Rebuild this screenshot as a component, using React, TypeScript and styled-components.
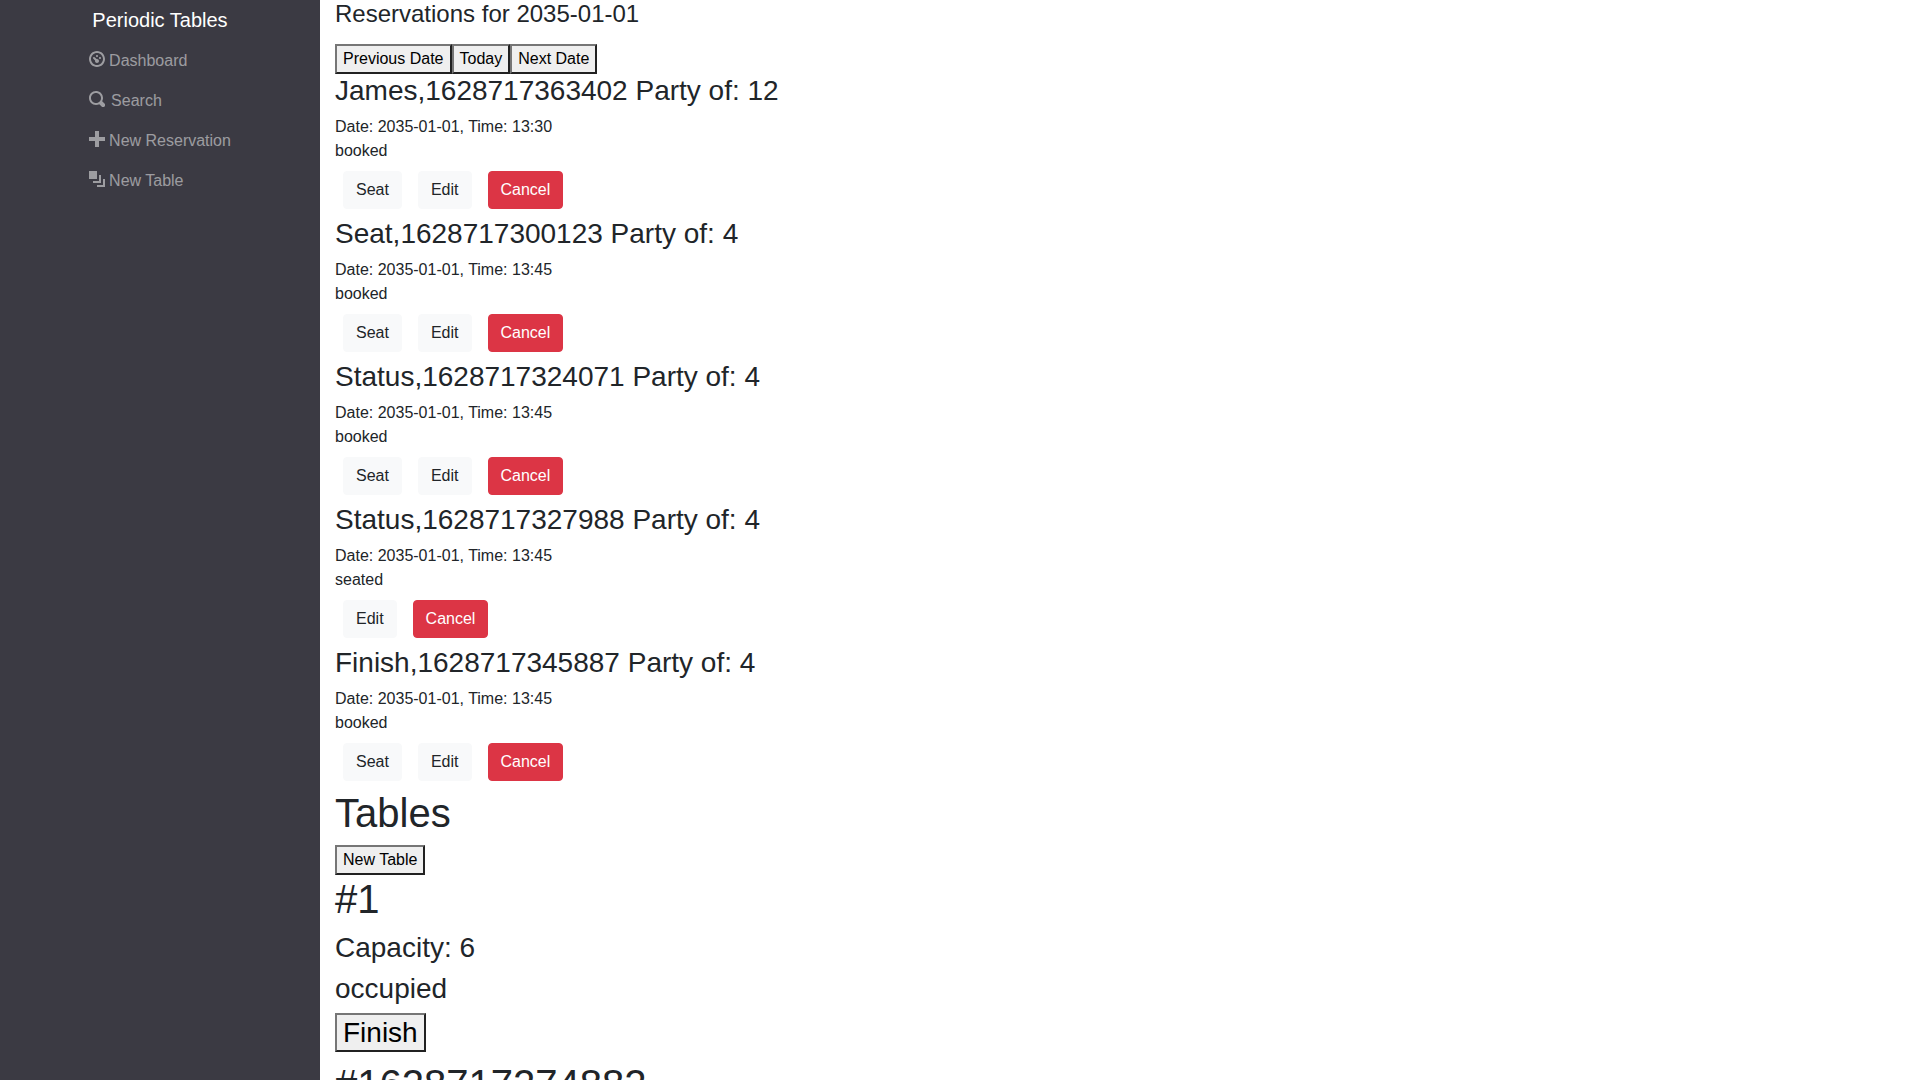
import React from "react";
import styled, { createGlobalStyle } from "styled-components";

const GlobalStyle = createGlobalStyle`
  *, *::before, *::after { box-sizing: border-box; }
  body {
    margin: 0;
    background: #fff;
    color: #212529;
    font-family: "Liberation Sans", Arial, sans-serif;
    font-size: 16px;
    line-height: 24px;
  }
`;

const Layout = styled.div`
  display: grid;
  grid-template-columns: minmax(0, 1fr) minmax(0, 5fr);
  height: 100vh;
  overflow: hidden;
`;

const Sidebar = styled.nav`
  display: flex;
  flex-direction: column;
  align-items: center;
  background: #3b3a43;
`;

const Brand = styled.a`
  color: #fff;
  font-size: 20px;
  line-height: 40px;
  text-decoration: none;
`;

const NavList = styled.ul`
  margin: 0;
  padding: 0;
  list-style: none;
`;

const NavLink = styled.a<{ $gap: number }>`
  display: flex;
  align-items: center;
  gap: ${(p) => p.$gap}px;
  height: 40px;
  padding-top: 2px;
  color: rgba(255, 255, 255, 0.5);
  text-decoration: none;
`;

const Icon = styled.svg`
  width: 16px;
  height: 16px;
  margin-bottom: 4px;
  fill: currentColor;
`;

const Main = styled.main`
  padding: 0 15px;
`;

const DateHeading = styled.h4`
  margin: 0 0 16px;
  font-size: 24px;
  font-weight: 400;
  line-height: 28px;
`;

const PageHeading = styled.h1`
  margin: 0 0 8px;
  font-size: 40px;
  font-weight: 400;
  line-height: 48px;
`;

const ItemHeading = styled.h3`
  margin: 0 0 8px;
  font-size: 28px;
  font-weight: 400;
  line-height: 33px;
`;

const Row = styled.div`
  display: flex;
`;

const Text = styled.p`
  margin: 0;
`;

const PlainButton = styled.button<{ $large?: boolean }>`
  padding: 1px 6px;
  border: 2px solid;
  border-color: #767676 #212121 #212121 #767676;
  border-radius: 0;
  background: #efefef;
  color: #000;
  font-family: inherit;
  font-size: ${(p) => (p.$large ? 28 : 16)}px;
  line-height: ${(p) => (p.$large ? 33 : 24)}px;
`;

const ActionButton = styled.button<{ $danger?: boolean }>`
  margin: 8px;
  padding: 6px 12px;
  border: 1px solid ${(p) => (p.$danger ? "#dc3545" : "#f8f9fa")};
  border-radius: 4px;
  background: ${(p) => (p.$danger ? "#dc3545" : "#f8f9fa")};
  color: ${(p) => (p.$danger ? "#fff" : "#212529")};
  font-family: inherit;
  font-size: 16px;
  line-height: 24px;
`;

const links = [
  {
    label: "Dashboard",
    gap: 4,
    path: "M4 0c-2.2 0-4 1.8-4 4s1.8 4 4 4 4-1.8 4-4-1.8-4-4-4zm0 1c1.66 0 3 1.34 3 3s-1.34 3-3 3-3-1.34-3-3 1.34-3 3-3zm0 1c-.28 0-.5.22-.5.5s.22.5.5.5.5-.22.5-.5-.22-.5-.5-.5zm-1.66 1a.5.5 0 0 0-.19.84l.91.91c-.02.08-.06.16-.06.25 0 .55.45 1 1 1s1-.45 1-1-.45-1-1-1c-.09 0-.17.04-.25.06l-.91-.91a.5.5 0 0 0-.44-.16.5.5 0 0 0-.06 0zm3.16 0c-.28 0-.5.22-.5.5s.22.5.5.5.5-.22.5-.5-.22-.5-.5-.5z",
  },
  {
    label: "Search",
    gap: 6,
    path: "M3.5 0c-1.93 0-3.5 1.57-3.5 3.5s1.57 3.5 3.5 3.5c.59 0 1.17-.14 1.66-.41a1 1 0 0 0 .13.13l1 1a1.02 1.02 0 1 0 1.44-1.44l-1-1a1 1 0 0 0-.16-.13c.27-.49.44-1.06.44-1.66 0-1.93-1.55-3.5-3.5-3.5zm0 1c1.39 0 2.5 1.11 2.5 2.5 0 .66-.24 1.27-.66 1.72-.01.01-.02.02-.03.03a1 1 0 0 0-.13.13c-.44.4-1.04.63-1.69.63-1.39 0-2.5-1.11-2.5-2.5s1.11-2.5 2.5-2.5z",
  },
  {
    label: "New Reservation",
    gap: 4,
    path: "M3 0v3h-3v2h3v3h2v-3h3v-2h-3v-3h-2z",
  },
  {
    label: "New Table",
    gap: 4,
    path: "M0 0v4h4v-4h-4zm5 2v3h-3v1h4v-4h-1zm2 2v3h-3v1h4v-4h-1z",
  },
];

const date = "2035-01-01";

const reservations = [
  { name: "James,1628717363402", people: 12, time: "13:30", status: "booked" },
  { name: "Seat,1628717300123", people: 4, time: "13:45", status: "booked" },
  { name: "Status,1628717324071", people: 4, time: "13:45", status: "booked" },
  { name: "Status,1628717327988", people: 4, time: "13:45", status: "seated" },
  { name: "Finish,1628717345887", people: 4, time: "13:45", status: "booked" },
];

export default function App() {
  return (
    <>
      <GlobalStyle />
      <Layout>
        <Sidebar>
          <Brand href="#">Periodic Tables</Brand>
          <NavList>
            {links.map((link) => (
              <li key={link.label}>
                <NavLink href="#" $gap={link.gap}>
                  <Icon viewBox="0 0 8 8" aria-hidden="true">
                    <path d={link.path} />
                  </Icon>
                  {link.label}
                </NavLink>
              </li>
            ))}
          </NavList>
        </Sidebar>
        <Main>
          <DateHeading>Reservations for {date}</DateHeading>
          <Row>
            <PlainButton type="button">Previous Date</PlainButton>
            <PlainButton type="button">Today</PlainButton>
            <PlainButton type="button">Next Date</PlainButton>
          </Row>
          {reservations.map((r) => (
            <section key={r.name}>
              <ItemHeading>
                {r.name} Party of: {r.people}
              </ItemHeading>
              <Text>
                Date: {date}, Time: {r.time}
              </Text>
              <Text>{r.status}</Text>
              <Row>
                {r.status === "booked" && <ActionButton type="button">Seat</ActionButton>}
                <ActionButton type="button">Edit</ActionButton>
                <ActionButton type="button" $danger>
                  Cancel
                </ActionButton>
              </Row>
            </section>
          ))}
          <PageHeading>Tables</PageHeading>
          <Row>
            <PlainButton type="button">New Table</PlainButton>
          </Row>
          <PageHeading>#1</PageHeading>
          <ItemHeading>Capacity: 6</ItemHeading>
          <ItemHeading>occupied</ItemHeading>
          <ItemHeading as="div">
            <Row>
              <PlainButton type="button" $large>
                Finish
              </PlainButton>
            </Row>
          </ItemHeading>
          <PageHeading>#1628717274882</PageHeading>
        </Main>
      </Layout>
    </>
  );
}
